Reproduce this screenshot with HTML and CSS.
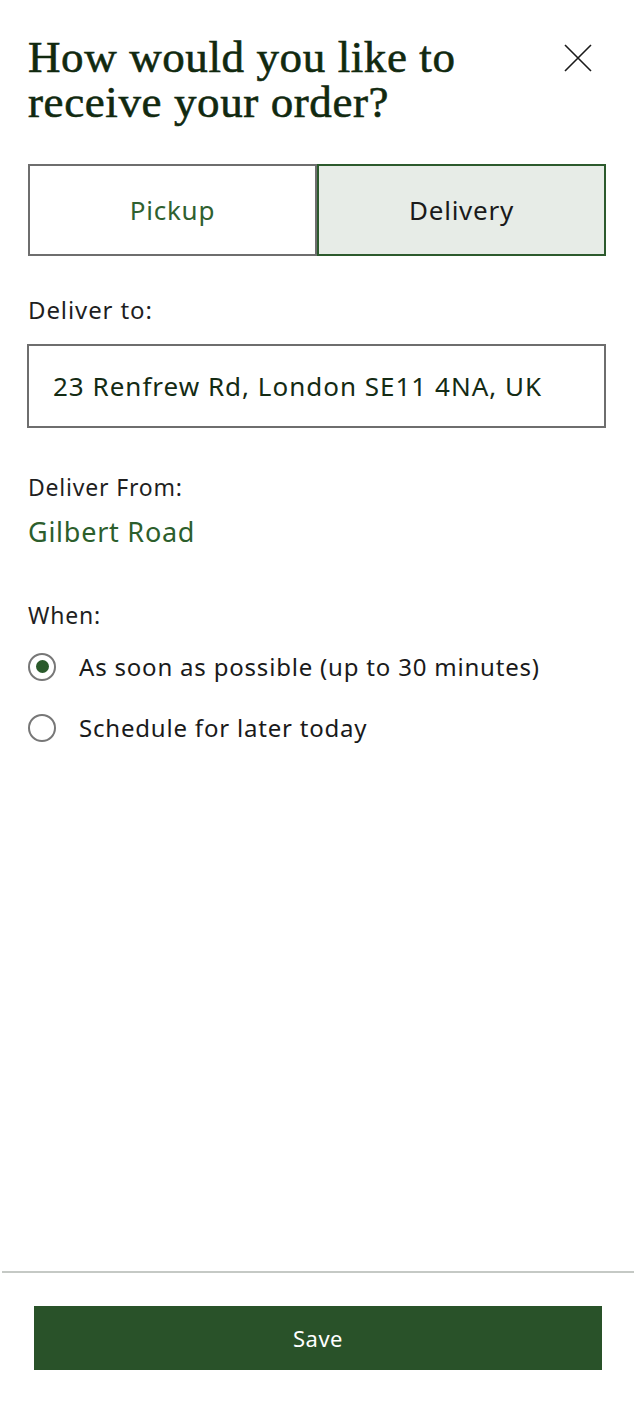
FILE: index.html
```html
<!DOCTYPE html>
<html lang="en">
<head>
    <meta charset="UTF-8">
    <meta name="viewport" content="width=device-width, initial-scale=1.0">
    <title>Order method</title>
    <link rel="stylesheet" href="styles.css">
</head>
<body>
    <div class="sheet">
        <div class="header">
            <h1>How would you like to receive your order?</h1>
            <button class="close" aria-label="Close">
                <svg width="28" height="28" viewBox="0 0 28 28">
                    <path d="M1 1 L27 27 M27 1 L1 27" stroke="#1a1a1a" stroke-width="1.6" fill="none"/>
                </svg>
            </button>
        </div>

        <div class="tabs">
            <button class="tab">Pickup</button>
            <button class="tab active">Delivery</button>
        </div>

        <div class="field">
            <label class="label" for="address">Deliver to:</label>
            <input class="address" id="address" type="text" value="23 Renfrew Rd, London SE11 4NA, UK">
        </div>

        <div class="from">
            <div class="label small">Deliver From:</div>
            <div class="store">Gilbert Road</div>
        </div>

        <div class="when">
            <div class="label small">When:</div>
            <label class="option">
                <span class="radio checked"></span>
                As soon as possible (up to 30 minutes)
            </label>
            <label class="option">
                <span class="radio"></span>
                Schedule for later today
            </label>
        </div>

        <div class="footer">
            <button class="save">Save</button>
        </div>
    </div>
</body>
</html>
```

FILE: styles.css
```css
body {
    margin: 0;
    padding: 0;
    background: #fff;
    font-family: 'Noto Sans', Arial, sans-serif;
    color: #1a1a1a;
}

.sheet {
    width: 634px;
    height: 1408px;
    display: flex;
    flex-direction: column;
}

.header {
    display: flex;
    justify-content: space-between;
    align-items: flex-start;
    padding: 35px 42px 0 28px;
}

h1 {
    margin: 0;
    font-family: 'Liberation Serif', 'Times New Roman', serif;
    font-weight: normal;
    font-size: 45px;
    line-height: 45px;
    color: #11290f;
    width: 470px;
    letter-spacing: 0.6px;
    -webkit-text-stroke: 0.6px #11290f;
}

.close {
    border: none;
    background: none;
    padding: 0;
    margin-top: 9px;
    cursor: pointer;
}

.tabs {
    display: flex;
    margin: 39px 28px 0 28px;
}

.tab {
    flex: 1;
    height: 92px;
    font-family: 'Noto Sans', Arial, sans-serif;
    font-size: 26px;
    letter-spacing: 0.75px;
    color: #2f6130;
    background: #fff;
    border: 2px solid #6e6e6e;
    cursor: pointer;
}

.tab.active {
    color: #1a1a1a;
    background: #e7ece7;
    border-color: #2c5a2d;
}

.field {
    margin: 39px 27px 0 28px;
}

.label {
    display: block;
    font-size: 24px;
    letter-spacing: 0.9px;
    color: #1f1f1f;
    line-height: 30px;
}

.label.small {
    font-size: 23px;
    letter-spacing: 0.8px;
}

.address {
    display: block;
    box-sizing: border-box;
    width: 100%;
    height: 84px;
    margin-top: 19px;
    margin-left: -1px;
    padding: 0 24px;
    border: 2px solid #6e6e6e;
    font-family: 'Noto Sans', Arial, sans-serif;
    font-size: 26px;
    letter-spacing: 1px;
    color: #142b14;
    outline: none;
}

.from {
    margin: 44px 28px 0 28px;
}

.store {
    margin-top: 11px;
    font-size: 27px;
    letter-spacing: 0.75px;
    color: #2c5e2c;
}

.when {
    margin: 50px 28px 0 28px;
}

.option {
    display: flex;
    align-items: center;
    gap: 23px;
    margin-top: 20px;
    font-size: 24px;
    letter-spacing: 0.8px;
    color: #1a1a1a;
}

.option + .option {
    margin-top: 28px;
}

.radio {
    box-sizing: border-box;
    width: 28px;
    height: 28px;
    border: 2px solid #777;
    border-radius: 50%;
    display: flex;
    align-items: center;
    justify-content: center;
}

.radio.checked::after {
    content: "";
    width: 13px;
    height: 13px;
    border-radius: 50%;
    background: #2a5a2b;
}

.footer {
    margin-top: auto;
    border-top: 2px solid #c5c9c5;
    margin-left: 2px;
    padding: 33px 32px 38px 32px;
}

.save {
    display: block;
    width: 100%;
    height: 64px;
    border: none;
    background: #295229;
    color: #fff;
    font-family: 'Noto Sans', Arial, sans-serif;
    font-size: 22px;
    letter-spacing: 0.5px;
    cursor: pointer;
}
```
